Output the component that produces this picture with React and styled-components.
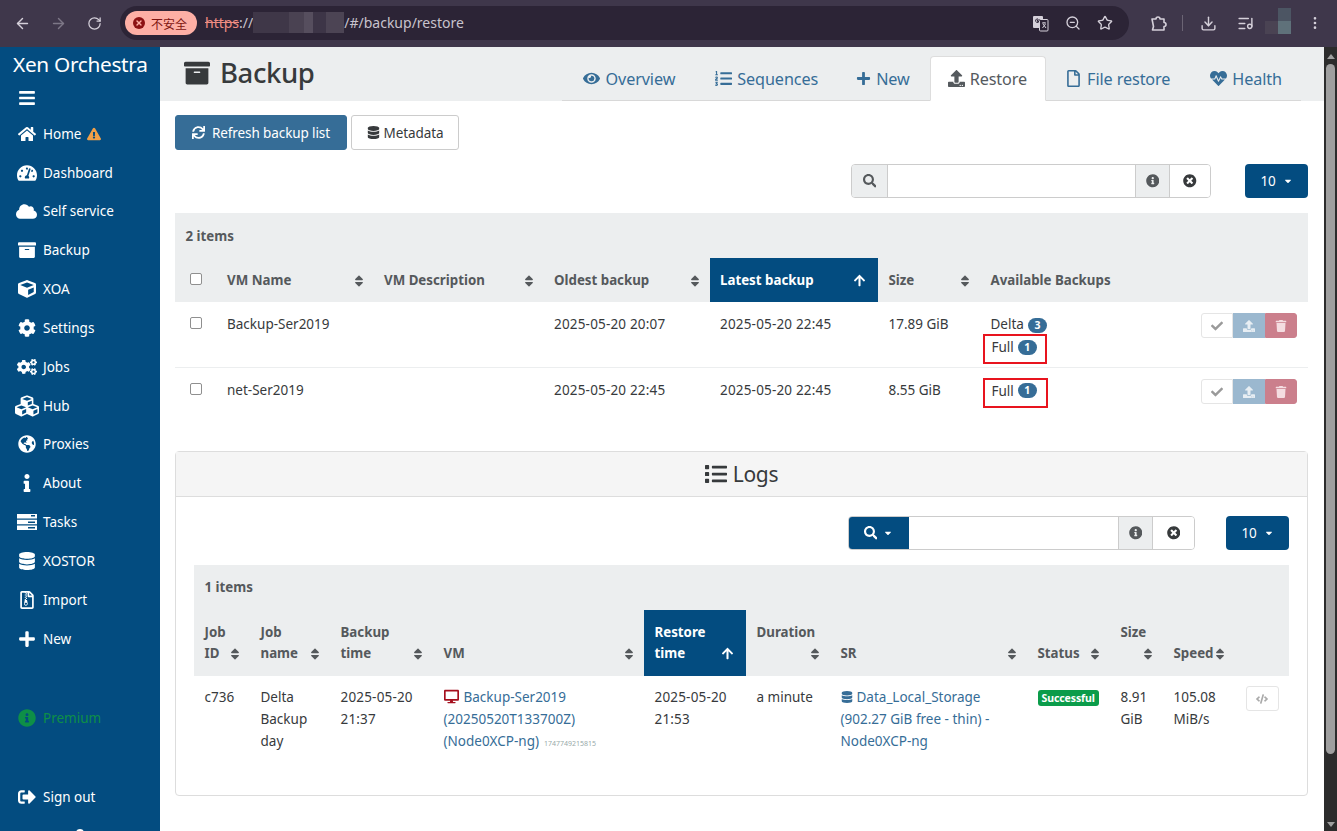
import React from "react";
import styled, { createGlobalStyle } from "styled-components";
import {
  FaArchive, FaHome, FaExclamationTriangle, FaTachometerAlt, FaCloud, FaCube, FaCog, FaCogs, FaCubes,
  FaGlobeAmericas, FaInfo, FaDatabase, FaRegFileArchive, FaPlus, FaInfoCircle, FaSignOutAlt, FaEye,
  FaListOl, FaUpload, FaRegFile, FaHeartbeat, FaSync, FaSearch, FaTimesCircle, FaSort, FaArrowUp,
  FaCheck, FaTrash, FaCode, FaDesktop, FaList, FaBars, FaCaretDown,
} from "react-icons/fa";
import { ArrowLeft, ArrowRight, RotateCw, ZoomOut, Star, Download, ListMusic, EllipsisVertical, X } from "lucide-react";

const navy = "#034c80";
const blue = "#366d97";
const grey = "#eceeef";
const font = `"Noto Sans", "Open Sans", Arial, sans-serif`;

const GlobalStyle = createGlobalStyle`
  html, body {
    margin: 0;
    height: 100%;
    overflow: hidden;
    background: #fff;
  }
  body {
    font-family: ${font};
    font-size: 13.5px;
    color: #373a3c;
  }
`;

const Page = styled.div`
  width: 1337px;
  height: 831px;
  display: flex;
  flex-direction: column;
  overflow: hidden;
`;

/* browser toolbar */
const Chrome = styled.div`
  height: 47px;
  flex: none;
  box-sizing: border-box;
  padding: 6px 0 7px 4px;
  display: flex;
  align-items: center;
  background: #3f374b;
  color: #d5d0da;
`;
const NavBtn = styled.span`
  width: 36px;
  display: flex;
  justify-content: center;
  flex: none;
  color: ${(p) => (p.$off ? "#7d7787" : "#d5d0da")};
`;
const Omnibox = styled.div`
  margin-left: 8px;
  width: 1009px;
  height: 34px;
  flex: none;
  box-sizing: border-box;
  padding: 0 16px 0 5px;
  border-radius: 17px;
  background: #2c2436;
  display: flex;
  align-items: center;
`;
const SecurityChip = styled.div`
  height: 24px;
  width: 72px;
  box-sizing: border-box;
  padding-left: 8px;
  border-radius: 12px;
  background: #fdafa5;
  color: #7d1410;
  display: flex;
  align-items: center;
  gap: 6px;
  font: 12px "Noto Sans CJK SC", sans-serif;
`;
const ErrDot = styled.span`
  width: 12px;
  height: 12px;
  border-radius: 50%;
  background: #8c1113;
  color: #fdafa5;
  display: flex;
  align-items: center;
  justify-content: center;
`;
const Url = styled.div`
  margin-left: 8px;
  flex: 1;
  display: flex;
  align-items: center;
  font: 14px "Noto Sans", sans-serif;
  line-height: 20px;
  padding-bottom: 1px;
  color: #c8c3cd;
`;
const Https = styled.span`
  color: #ef8d82;
  text-decoration: line-through;
`;
const Blurred = styled.span`
  width: 91px;
  height: 21px;
  background: linear-gradient(90deg, #3f3748 0 40%, #4a4252 40% 56%, #564e5e 56% 66%, #3d3547 66% 80%, #4c4454 80% 100%);
`;
const OmniIcons = styled.div`
  display: flex;
  align-items: center;
  gap: 16px;
  color: #d5d0da;
`;
const ChromeRight = styled.div`
  flex: 1;
  display: flex;
  align-items: center;
  padding-left: 20px;
  color: #d5d0da;
`;
const Divider = styled.span`
  width: 1px;
  height: 16px;
  background: #6b6474;
  margin: 0 17px 0 15px;
`;
const ToolGap = styled.span`
  width: 20px;
  flex: none;
`;
const Avatar = styled.span`
  width: 26px;
  height: 26px;
  flex: none;
  margin: -4px 16px 0 11px;
  background:
    linear-gradient(180deg, #4c5563 50%, #5f717a 50%) right / 50% 100% no-repeat,
    linear-gradient(180deg, transparent 50%, #4a4353 50%) left / 50% 100% no-repeat;
`;

/* page below the toolbar */
const Body = styled.div`
  flex: 1;
  display: flex;
  min-height: 0;
`;
const Sidebar = styled.nav`
  width: 160px;
  flex: none;
  position: relative;
  background: ${navy};
  color: #fff;
  display: flex;
  flex-direction: column;
`;
const Brand = styled.div`
  font-size: 20.8px;
  line-height: 35px;
  padding-left: 13px;
  white-space: nowrap;
  letter-spacing: -0.3px;
`;
const Burger = styled.div`
  height: 32.3px;
  padding-left: 18px;
  display: flex;
  align-items: center;
  font-size: 18px;
`;
const NavItem = styled.div`
  height: 38.85px;
  flex: none;
  display: flex;
  align-items: center;
  gap: 6px;
  color: ${(p) => p.$color || "#fff"};
  margin-top: ${(p) => p.$gap || 0}px;
`;
const NavIcon = styled.span`
  width: 21px;
  margin-left: 16px;
  display: flex;
  justify-content: center;
  font-size: ${(p) => p.$size || 18}px;
  svg {
    flex: none;
  }
`;
const Warn = styled.span`
  color: #f0a048;
  display: flex;
  font-size: 14px;
`;
const Dot = styled.span`
  position: absolute;
  left: 76px;
  bottom: -6px;
  width: 8px;
  height: 8px;
  border-radius: 50%;
  background: #fff;
`;

const Main = styled.main`
  flex: 1;
  min-width: 0;
`;
const Header = styled.header`
  height: 54px;
  box-sizing: border-box;
  padding: 0 23px 0 24px;
  background: ${grey};
  display: flex;
  justify-content: space-between;
`;
const Title = styled.h1`
  margin: 0;
  display: flex;
  align-items: center;
  gap: 10px;
  height: 51px;
  font-size: 27.5px;
  font-weight: 500;
  letter-spacing: -0.4px;
  color: #373a3c;
`;
const Tabs = styled.div`
  display: flex;
  align-items: flex-end;
  height: 54px;
  box-sizing: border-box;
  border-bottom: 1px solid #d8d8d8;
`;
const Tab = styled.div`
  height: 45px;
  box-sizing: border-box;
  display: flex;
  align-items: center;
  gap: 5px;
  padding: 0 18px 0 ${(p) => (p.$active ? 17 : 18)}px;
  margin-left: ${(p) => p.$ml}px;
  font-size: 16.2px;
  letter-spacing: -0.1px;
  color: ${(p) => (p.$active ? "#555a5e" : blue)};
  background: ${(p) => (p.$active ? "#fff" : "transparent")};
  border: 1px solid ${(p) => (p.$active ? "#ddd" : "transparent")};
  border-bottom: ${(p) => (p.$active ? "1px solid #fff" : "1px solid transparent")};
  margin-bottom: -1px;
  border-radius: 4px 4px 0 0;
`;
const Content = styled.div`
  padding: 14px 16px 0 15px;
`;
const Actions = styled.div`
  display: flex;
  gap: 4px;
`;
const Button = styled.button`
  width: ${(p) => p.$w}px;
  height: 35px;
  box-sizing: border-box;
  padding: 0;
  display: flex;
  align-items: center;
  justify-content: center;
  gap: ${(p) => p.$gap}px;
  font-family: ${font};
  font-size: 13.5px;
  letter-spacing: -0.1px;
  border-radius: 3px;
  border: 1px solid ${(p) => (p.$primary ? blue : "#ccc")};
  background: ${(p) => (p.$primary ? blue : "#fff")};
  color: ${(p) => (p.$primary ? "#fff" : "#373a3c")};
`;
const FilterRow = styled.div`
  display: flex;
  justify-content: flex-end;
  margin-top: ${(p) => p.$mt}px;
  gap: ${(p) => p.$gap}px;
`;
const SearchGroup = styled.div`
  display: flex;
  height: 34px;
  width: ${(p) => p.$w}px;
  box-sizing: border-box;
  border: 1px solid #ccc;
  border-radius: 4px;
  background: #fff;
  overflow: hidden;
`;
const Addon = styled.span`
  width: ${(p) => p.$w}px;
  flex: none;
  display: flex;
  align-items: center;
  justify-content: center;
  gap: 6px;
  font-size: 13.5px;
  background: ${(p) => (p.$navy ? navy : p.$plain ? "#fff" : grey)};
  color: ${(p) => (p.$navy ? "#fff" : "#55595c")};
  border-left: ${(p) => (p.$line ? "1px solid #ccc" : "none")};
  border-right: ${(p) => (p.$end ? "1px solid #ccc" : "none")};
  margin: ${(p) => (p.$navy ? "-1px 0 -1px -1px" : "0")};
`;
const Clear = styled(Addon)`
  color: #373a3c;
`;
const SearchInput = styled.span`
  flex: 1;
`;
const PageSize = styled.div`
  width: 63px;
  height: 34px;
  border-radius: 4px;
  background: ${navy};
  color: #fff;
  display: flex;
  align-items: center;
  justify-content: center;
  gap: 7px;
  font-size: 13.5px;
  letter-spacing: -0.2px;
`;
const TableWrap = styled.div`
  margin-top: 15px;
`;
const ItemCount = styled.div`
  height: 45px;
  box-sizing: border-box;
  padding: ${(p) => p.$top}px 0 0 10.5px;
  background: ${grey};
  font-weight: 700;
  font-size: 13.3px;
  color: #55595c;
`;
const Table = styled.table`
  width: 100%;
  border-collapse: collapse;
  table-layout: fixed;
`;
const Th = styled.th`
  width: ${(p) => p.$w}px;
  box-sizing: border-box;
  padding: 0 10px ${(p) => p.$pb}px 10.5px;
  height: ${(p) => p.$h}px;
  text-align: left;
  vertical-align: bottom;
  font-size: 13.3px;
  line-height: 21px;
  font-weight: 700;
  color: ${(p) => (p.$sorted ? "#fff" : "#55595c")};
  background: ${(p) => (p.$sorted ? navy : grey)};
`;
const SortIcon = styled.span`
  float: right;
  width: ${(p) => (p.$sorted ? 13 : 10)}px;
  margin-right: ${(p) => (p.$sorted ? 2 : 0)}px;
  height: 21px;
  display: flex;
  justify-content: center;
  align-items: center;
  font-size: ${(p) => (p.$sorted ? 13 : 14)}px;
  svg {
    flex: none;
  }
`;
const Td = styled.td`
  box-sizing: border-box;
  padding: ${(p) => p.$pt || 11}px 10px ${(p) => p.$pb || 0}px 10.5px;
  vertical-align: top;
  font-size: 13.5px;
  line-height: 22px;
  letter-spacing: ${(p) => (p.$date ? "0.18px" : "0")};
  color: #373a3c;
  border-bottom: ${(p) => (p.$line ? "1px solid #eceeef" : "none")};
`;
const CheckBox = styled.span`
  display: block;
  width: 10px;
  height: 10px;
  margin: 4px 0 0 4px;
  border: 1px solid #8f8f8f;
  border-radius: 2px;
  background: #fff;
`;
const HeadCheck = styled(CheckBox)`
  margin: 0 0 6px 4px;
`;
const Badge = styled.span`
  display: inline-flex;
  align-items: center;
  justify-content: center;
  min-width: 19px;
  height: 15px;
  margin-left: 4px;
  border-radius: 8px;
  background: ${blue};
  color: #fff;
  font-size: 10.5px;
  font-weight: 700;
  line-height: 15px;
`;
const Highlight = styled.div`
  width: ${(p) => p.$w}px;
  height: 30px;
  margin: -1px 0 0 -8px;
  box-sizing: border-box;
  padding: 0 0 ${(p) => p.$pb}px 7px;
  border: 2px solid #e8141e;
  display: flex;
  align-items: center;
`;
const RowButtons = styled.div`
  display: flex;
  justify-content: flex-end;
  margin-right: 1px;
`;
const IconBtn = styled.span`
  width: ${(p) => p.$w || 32}px;
  height: 25px;
  box-sizing: border-box;
  display: flex;
  align-items: center;
  justify-content: center;
  font-size: 12px;
  background: ${(p) => p.$bg || "#fff"};
  color: ${(p) => p.$color || "#9a9a9a"};
  border: 1px solid ${(p) => p.$border || "#e5e5e5"};
  border-radius: ${(p) => p.$radius || "3px"};
`;
const Card = styled.section`
  margin-top: 43px;
  height: 345px;
  box-sizing: border-box;
  border: 1px solid #ddd;
  border-radius: 4px;
`;
const CardHead = styled.div`
  height: 45px;
  box-sizing: border-box;
  background: #f5f5f5;
  border-bottom: 1px solid #ddd;
  display: flex;
  align-items: center;
  justify-content: center;
  gap: 6px;
  font-size: 21px;
  letter-spacing: -0.3px;
`;
const CardBody = styled.div`
  padding: 19px 18px 0 18px;
`;
const Link = styled.span`
  color: ${blue};
`;
const Tiny = styled.span`
  font-size: 7px;
  color: #9aa;
  margin-left: 5px;
`;
const VmIcon = styled.span`
  color: #a50f1d;
  margin-right: 5px;
  font-size: 15px;
  vertical-align: -2px;
  display: inline-flex;
`;
const SrIcon = styled.span`
  color: ${blue};
  margin-right: 4px;
  font-size: 12px;
  vertical-align: -1px;
  display: inline-flex;
`;
const Status = styled.span`
  display: inline-flex;
  align-items: center;
  height: 16px;
  padding: 0 4px;
  margin-top: 4px;
  border-radius: 3px;
  background: #0b9c4a;
  color: #fff;
  font-size: 10.5px;
  line-height: 16px;
  font-weight: 700;
  letter-spacing: -0.1px;
`;
const Scrollbar = styled.aside`
  width: 13px;
  flex: none;
  background: #2c2c2c;
  display: flex;
  flex-direction: column;
  align-items: center;
  padding: 7px 0 4px;
  box-sizing: border-box;
`;
const ScrollThumb = styled.div`
  width: 9px;
  height: 690px;
  margin-top: 5px;
  border-radius: 5px;
  background: #9f9f9f;
`;
const ScrollArrow = styled.span`
  width: 0;
  height: 0;
  border-left: 4px solid transparent;
  border-right: 4px solid transparent;
  border-${(p) => (p.$down ? "top" : "bottom")}: 5px solid #9f9f9f;
  margin-top: ${(p) => (p.$down ? "auto" : "0")};
`;

// fa-tasks from the old icon set: three solid bars with a small mark at the right
const TasksIcon = () => (
  <svg width="20" height="16" viewBox="0 0 20 16" fill="currentColor" fillRule="evenodd">
    <path d="M0 0h20v4.5H0zM14 1v1.5h4V1z" />
    <path d="M0 5.75h20v4.5H0zM11 7.5V9h7V7.5z" />
    <path d="M0 11.5h20V16H0zM11 13v1.5h7V13z" />
  </svg>
);

// translate button: a filled sheet behind an outlined one
const TranslateIcon = () => (
  <svg width="17" height="17" viewBox="0 0 17 17">
    <rect x="1" y="1" width="10" height="12" rx="1" fill="#d5d0da" />
    <rect x="7.5" y="4.5" width="8.5" height="11.5" rx="1" fill="#2c2436" stroke="#d5d0da" />
    <path d="M10 8h4M12 7v1M10.5 13l3-4M11 9l3 4" stroke="#d5d0da" fill="none" />
    <path d="M8 5H5.5v1.5H7A1.8 1.8 0 1 1 6 4" stroke="#2c2436" fill="none" />
  </svg>
);

const ExtensionIcon = () => (
  <svg width="18" height="18" viewBox="0 0 18 18" fill="none" stroke="currentColor" strokeWidth="1.6" strokeLinejoin="round">
    <path d="M3 5h4a2 2 0 0 1 4 0h4v3.5a2 2 0 0 1 0 4V16H3.5l1-3.5z" />
  </svg>
);

const navItems = [
  [FaHome, "Home", 18, true],
  [FaTachometerAlt, "Dashboard", 20],
  [FaCloud, "Self service", 21],
  [FaArchive, "Backup", 18],
  [FaCube, "XOA", 18],
  [FaCog, "Settings", 18],
  [FaCogs, "Jobs", 20],
  [FaCubes, "Hub", 24],
  [FaGlobeAmericas, "Proxies", 18],
  [FaInfo, "About", 18],
  [TasksIcon, "Tasks", 18],
  [FaDatabase, "XOSTOR", 18],
  [FaRegFileArchive, "Import", 18],
  [FaPlus, "New", 18],
];

const tabs = [
  [FaEye, "Overview", 17, 2],
  [FaListOl, "Sequences", 17, 2],
  [FaPlus, "New", 15, 0],
  [FaUpload, "Restore", 17, 1, true],
  [FaRegFile, "File restore", 17, 0],
  [FaHeartbeat, "Health", 17, 2],
];

const Sortable = ({ children, sorted }) => (
  <>
    {children}
    <SortIcon $sorted={sorted}>{sorted ? <FaArrowUp /> : <FaSort />}</SortIcon>
  </>
);

const RowActions = () => (
  <RowButtons>
    <IconBtn $radius="3px 0 0 3px"><FaCheck /></IconBtn>
    <IconBtn $bg="#9bb8cf" $border="#9bb8cf" $color="#e8eef3" $radius="0"><FaUpload /></IconBtn>
    <IconBtn $bg="#cb7f8c" $border="#cb7f8c" $color="#f4dde1" $radius="0 3px 3px 0"><FaTrash /></IconBtn>
  </RowButtons>
);

export default function App() {
  return (
    <Page>
      <GlobalStyle />
      <Chrome>
        <NavBtn><ArrowLeft size={17} /></NavBtn>
        <NavBtn $off><ArrowRight size={17} /></NavBtn>
        <NavBtn><RotateCw size={15} /></NavBtn>
        <Omnibox>
          <SecurityChip>
            <ErrDot><X size={8} strokeWidth={4} /></ErrDot>
            不安全
          </SecurityChip>
          <Url>
            <Https>https</Https>://<Blurred />/#/backup/restore
          </Url>
          <OmniIcons>
            <TranslateIcon />
            <ZoomOut size={16} />
            <Star size={16} />
          </OmniIcons>
        </Omnibox>
        <ChromeRight>
          <ExtensionIcon />
          <Divider />
          <Download size={17} />
          <ToolGap />
          <ListMusic size={17} />
          <Avatar />
          <EllipsisVertical size={16} />
        </ChromeRight>
      </Chrome>
      <Body>
        <Sidebar>
          <Brand>Xen Orchestra</Brand>
          <Burger><FaBars /></Burger>
          {navItems.map(([Icon, label, size, warn]) => (
            <NavItem key={label}>
              <NavIcon $size={size}><Icon /></NavIcon>
              {label}
              {warn && <Warn><FaExclamationTriangle /></Warn>}
            </NavItem>
          ))}
          <NavItem $color="#0e8f47" $gap={40.8}>
            <NavIcon><FaInfoCircle /></NavIcon>
            Premium
          </NavItem>
          <NavItem $gap={40}>
            <NavIcon><FaSignOutAlt /></NavIcon>
            Sign out
          </NavItem>
          <Dot />
        </Sidebar>
        <Main>
          <Header>
            <Title><FaArchive size={26} />Backup</Title>
            <Tabs>
              {tabs.map(([Icon, label, size, ml, active]) => (
                <Tab key={label} $active={active} $ml={ml}><Icon size={size} />{label}</Tab>
              ))}
            </Tabs>
          </Header>
          <Content>
            <Actions>
              <Button $primary $w={172} $gap={7}><FaSync size={13} />Refresh backup list</Button>
              <Button $w={108} $gap={4}><FaDatabase size={13} />Metadata</Button>
            </Actions>
            <FilterRow $mt={14} $gap={34}>
              <SearchGroup $w={360}>
                <Addon $w={35} $end><FaSearch /></Addon>
                <SearchInput />
                <Addon $w={33} $line><FaInfoCircle /></Addon>
                <Clear $w={40} $line $plain><FaTimesCircle /></Clear>
              </SearchGroup>
              <PageSize>10 <FaCaretDown size={10} /></PageSize>
            </FilterRow>
            <TableWrap>
              <ItemCount $top={14}>2 items</ItemCount>
              <Table>
                <thead>
                  <tr>
                    <Th $w={41.5} $h={44} $pb={11}><HeadCheck /></Th>
                    <Th $w={157} $h={44} $pb={11}><Sortable>VM Name</Sortable></Th>
                    <Th $w={170} $h={44} $pb={11}><Sortable>VM Description</Sortable></Th>
                    <Th $w={166} $h={44} $pb={11}><Sortable>Oldest backup</Sortable></Th>
                    <Th $w={168.5} $h={44} $pb={11} $sorted><Sortable sorted>Latest backup</Sortable></Th>
                    <Th $w={102} $h={44} $pb={11}><Sortable>Size</Sortable></Th>
                    <Th $w={210} $h={44} $pb={11}>Available Backups</Th>
                    <Th $h={44} $pb={11} />
                  </tr>
                </thead>
                <tbody>
                  <tr>
                    <Td $line><CheckBox /></Td>
                    <Td $line>Backup-Ser2019</Td>
                    <Td $line />
                    <Td $line $date>2025-05-20 20:07</Td>
                    <Td $line $date>2025-05-20 22:45</Td>
                    <Td $line>17.89 GiB</Td>
                    <Td $line $pb={3}>
                      <div>Delta<Badge>3</Badge></div>
                      <Highlight $w={64} $pb={4}>Full<Badge>1</Badge></Highlight>
                    </Td>
                    <Td $line><RowActions /></Td>
                  </tr>
                  <tr>
                    <Td><CheckBox /></Td>
                    <Td>net-Ser2019</Td>
                    <Td />
                    <Td $date>2025-05-20 22:45</Td>
                    <Td $date>2025-05-20 22:45</Td>
                    <Td>8.55 GiB</Td>
                    <Td><Highlight $w={65} $pb={5}>Full<Badge>1</Badge></Highlight></Td>
                    <Td><RowActions /></Td>
                  </tr>
                </tbody>
              </Table>
            </TableWrap>
            <Card>
              <CardHead><FaList size={22} />Logs</CardHead>
              <CardBody>
                <FilterRow $mt={0} $gap={31}>
                  <SearchGroup $w={347}>
                    <Addon $w={61} $navy><FaSearch /><FaCaretDown size={10} /></Addon>
                    <SearchInput />
                    <Addon $w={33} $line><FaInfoCircle /></Addon>
                    <Clear $w={41} $line $plain><FaTimesCircle /></Clear>
                  </SearchGroup>
                  <PageSize>10 <FaCaretDown size={10} /></PageSize>
                </FilterRow>
                <TableWrap>
                  <ItemCount $top={13}>1 items</ItemCount>
                  <Table>
                    <thead>
                      <tr>
                        <Th $w={56} $h={66} $pb={12}><Sortable>Job ID</Sortable></Th>
                        <Th $w={80} $h={66} $pb={12}><Sortable>Job<br />name</Sortable></Th>
                        <Th $w={103} $h={66} $pb={12}><Sortable>Backup<br />time</Sortable></Th>
                        <Th $w={211} $h={66} $pb={12}><Sortable>VM</Sortable></Th>
                        <Th $w={102} $h={66} $pb={12} $sorted><Sortable sorted>Restore<br />time</Sortable></Th>
                        <Th $w={84} $h={66} $pb={12}><Sortable>Duration</Sortable></Th>
                        <Th $w={197} $h={66} $pb={12}><Sortable>SR</Sortable></Th>
                        <Th $w={83} $h={66} $pb={12}><Sortable>Status</Sortable></Th>
                        <Th $w={53} $h={66} $pb={12}><Sortable>Size</Sortable></Th>
                        <Th $w={72} $h={66} $pb={12}><Sortable>Speed</Sortable></Th>
                        <Th $h={66} $pb={12} />
                      </tr>
                    </thead>
                    <tbody>
                      <tr>
                        <Td $pt={10}>c736</Td>
                        <Td $pt={10}>Delta Backup day</Td>
                        <Td $pt={10} $date>2025-05-20 21:37</Td>
                        <Td $pt={10}>
                          <VmIcon><FaDesktop /></VmIcon>
                          <Link>Backup-Ser2019 (20250520T133700Z)</Link>{" "}
                          <Link>(Node0XCP-ng)</Link>
                          <Tiny>1747749215815</Tiny>
                        </Td>
                        <Td $pt={10} $date>2025-05-20 21:53</Td>
                        <Td $pt={10}>a minute</Td>
                        <Td $pt={10}>
                          <SrIcon><FaDatabase /></SrIcon>
                          <Link>Data_Local_Storage (902.27 GiB free - thin) - Node0XCP-ng</Link>
                        </Td>
                        <Td $pt={10}><Status>Successful</Status></Td>
                        <Td $pt={10}>8.91 GiB</Td>
                        <Td $pt={10}>105.08 MiB/s</Td>
                        <Td $pt={10}>
                          <IconBtn $w={33} $color="#aaa"><FaCode /></IconBtn>
                        </Td>
                      </tr>
                    </tbody>
                  </Table>
                </TableWrap>
              </CardBody>
            </Card>
          </Content>
        </Main>
        <Scrollbar>
          <ScrollArrow />
          <ScrollThumb />
          <ScrollArrow $down />
        </Scrollbar>
      </Body>
    </Page>
  );
}
